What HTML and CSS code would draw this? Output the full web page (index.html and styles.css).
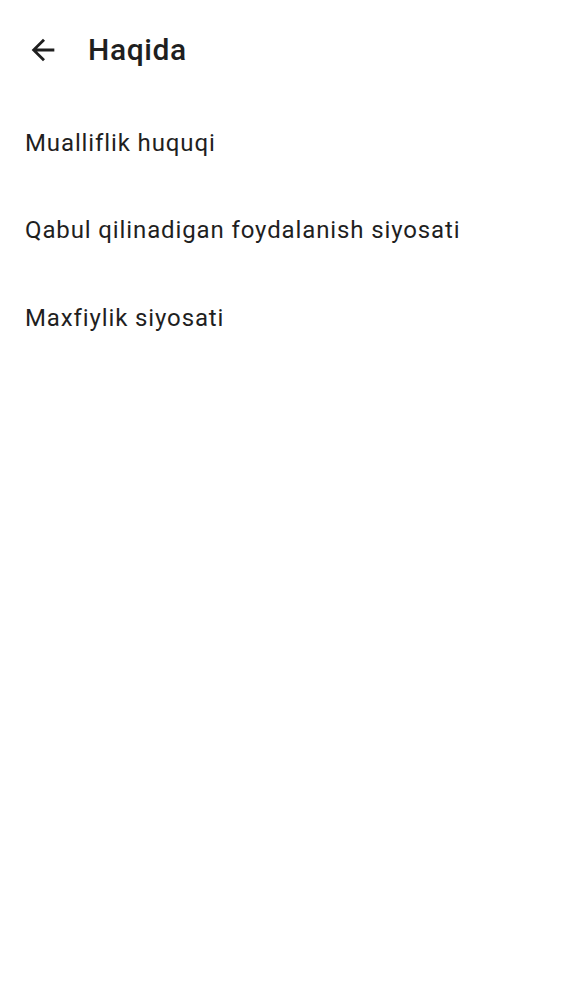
FILE: index.html
```html
<!DOCTYPE html>
<html>
<head>
<meta charset="utf-8">
<link rel="stylesheet" href="styles.css">
</head>
<body>
<header class="bar">
  <button class="back" aria-label="Back">
    <svg viewBox="0 0 24 24" width="34" height="34"><path d="M20 11H7.83l5.59-5.59L12 4l-8 8 8 8 1.41-1.41L7.83 13H20v-2z" fill="#1f1f1f"/></svg>
  </button>
  <h1 class="title">Haqida</h1>
</header>
<ul class="list">
  <li class="item">Mualliflik huquqi</li>
  <li class="item">Qabul qilinadigan foydalanish siyosati</li>
  <li class="item">Maxfiylik siyosati</li>
</ul>
</body>
</html>
```
FILE: styles.css
```css
html, body {
  margin: 0;
  padding: 0;
  background: #ffffff;
  font-family: Roboto, "Noto Sans", sans-serif;
  color: #1f1f1f;
}
.bar {
  display: flex;
  align-items: center;
  height: 100px;
}
.back {
  border: 0;
  background: none;
  padding: 0;
  margin-left: 26px;
  width: 34px;
  height: 34px;
  display: flex;
}
.title {
  margin: 0 0 0 28px;
  font-size: 30px;
  font-weight: 500;
  line-height: 36px;
  letter-spacing: 0.6px;
}
.list {
  list-style: none;
  margin: -1px 0 0;
  padding: 0;
}
.item {
  padding: 0 25px;
  height: 87.5px;
  display: flex;
  align-items: center;
  font-size: 24px;
  letter-spacing: 0.88px;
}
```
